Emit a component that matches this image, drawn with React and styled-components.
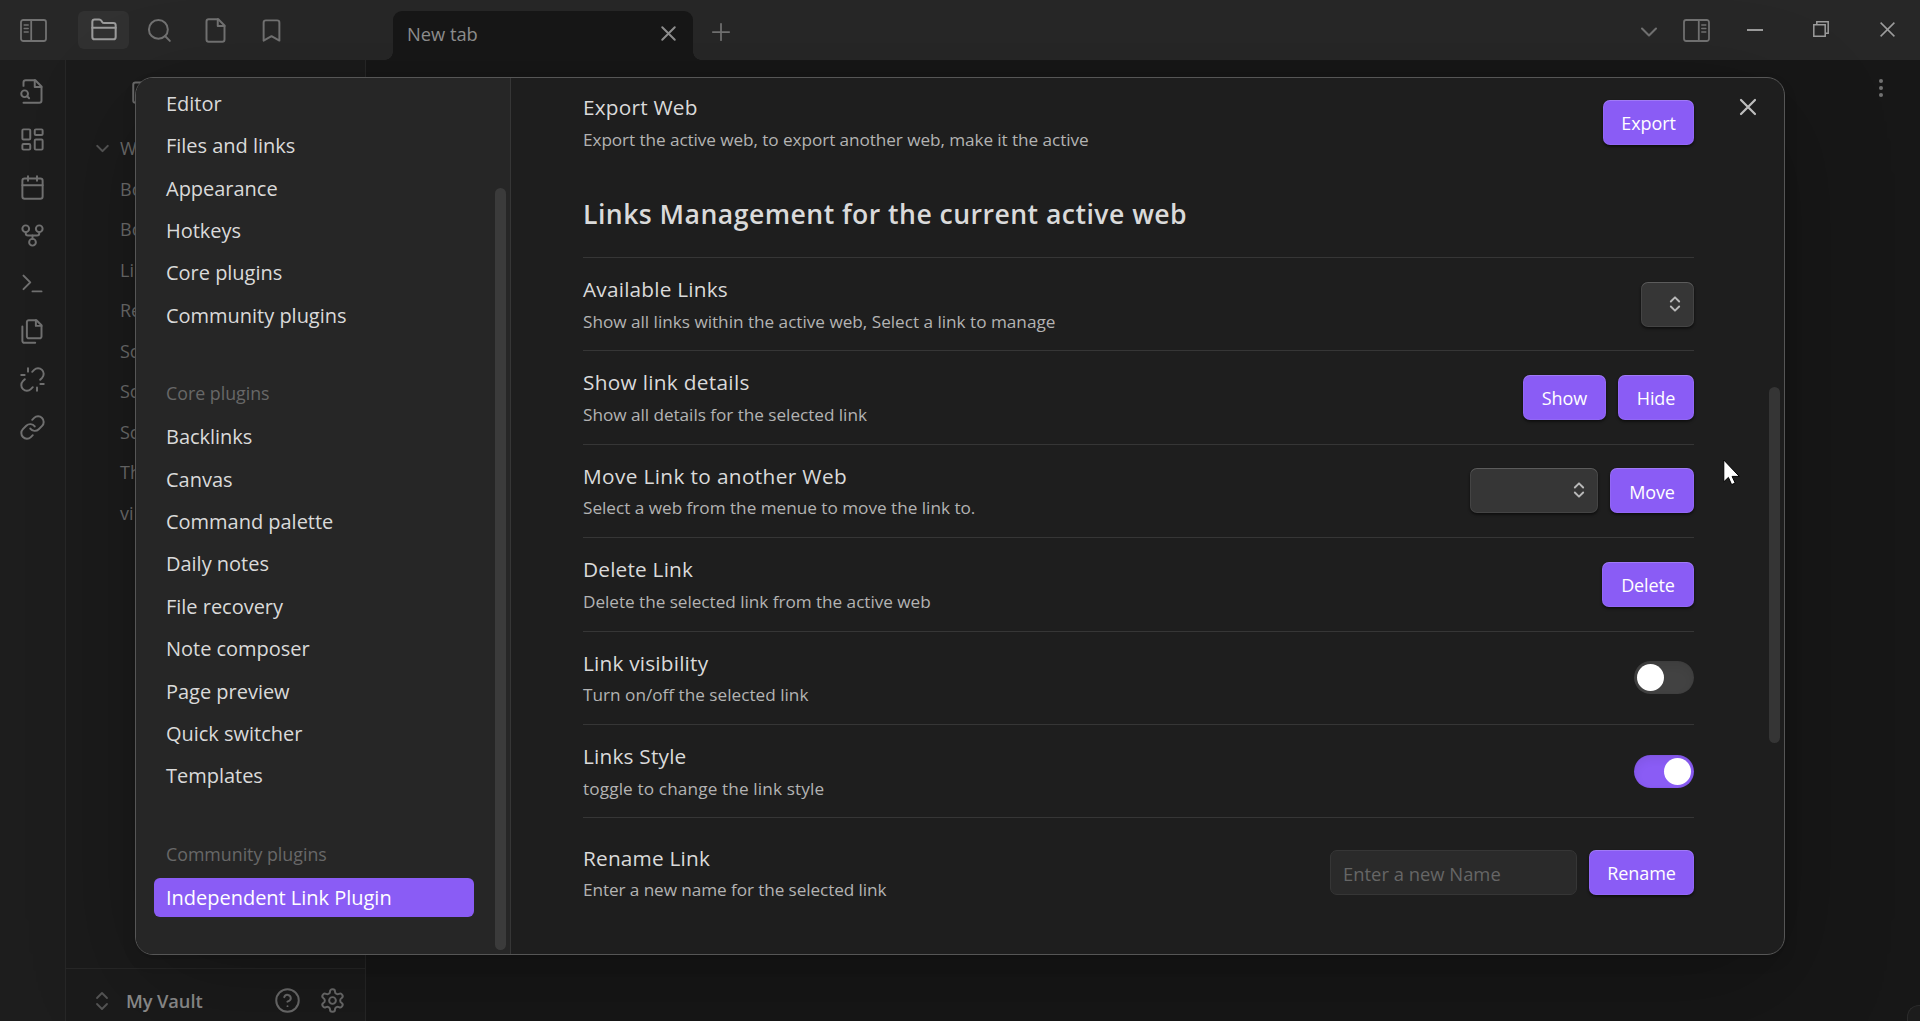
import React from "react";
import styled, { createGlobalStyle, css } from "styled-components";

const GlobalStyle = createGlobalStyle`
  *, *::before, *::after { box-sizing: border-box; }
  body {
    margin: 0;
    background: #171717;
    font-family: "Open Sans", "Noto Sans", sans-serif;
    color: #dadada;
  }
`;

/* ---------- icons ---------- */

const Svg = styled.svg`
  display: block;
  flex: none;
  width: ${(p) => p.$size}px;
  height: ${(p) => p.$size}px;
  fill: none;
  stroke: currentColor;
  stroke-width: ${(p) => p.$stroke};
  stroke-linecap: round;
  stroke-linejoin: round;
`;

const shapes = {
  folder: <><path d="M20 20a2 2 0 0 0 2-2V8a2 2 0 0 0-2-2h-7.9a2 2 0 0 1-1.69-.9L9.6 3.9A2 2 0 0 0 7.93 3H4a2 2 0 0 0-2 2v13a2 2 0 0 0 2 2Z" /><path d="M2 10h20" /></>,
  search: <><circle cx="11" cy="11" r="8.4" /><path d="m21.2 21.2-4.3-4.3" /></>,
  file: <><path d="M14.5 2H6a2 2 0 0 0-2 2v16a2 2 0 0 0 2 2h12a2 2 0 0 0 2-2V7.5L14.5 2z" /><path d="M14 2v6h6" /></>,
  bookmark: <path d="m19 21-7-4-7 4V5a2 2 0 0 1 2-2h10a2 2 0 0 1 2 2v16z" />,
  fileSearch: <><path d="M4 22h14a2 2 0 0 0 2-2V7.5L14.5 2H6a2 2 0 0 0-2 2v3" /><path d="M14 2v6h6" /><circle cx="5" cy="14" r="3" /><path d="m9 18-1.5-1.5" /></>,
  dashboard: <><rect x="3" y="3" width="7" height="9" rx="1" /><rect x="14" y="3" width="7" height="5" rx="1" /><rect x="14" y="12" width="7" height="9" rx="1" /><rect x="3" y="16" width="7" height="5" rx="1" /></>,
  calendar: <><rect x="3" y="4" width="18" height="18" rx="2" /><path d="M16 2v4M8 2v4M3 10h18" /></>,
  fork: <><circle cx="12" cy="18" r="3" /><circle cx="6" cy="6" r="3" /><circle cx="18" cy="6" r="3" /><path d="M18 9v1a2 2 0 0 1-2 2H8a2 2 0 0 1-2-2V9" /><path d="M12 12v3" /></>,
  terminal: <><path d="m4 17 6-6-6-6" /><path d="M12 19h8" /></>,
  files: <><path d="M15.5 2H8.6c-.4 0-.8.2-1.1.5-.3.3-.5.7-.5 1.1v12.8c0 .4.2.8.5 1.1.3.3.7.5 1.1.5h9.8c.4 0 .8-.2 1.1-.5.3-.3.5-.7.5-1.1V6.5L15.5 2z" /><path d="M3 7.6v12.8c0 .4.2.8.5 1.1.3.3.7.5 1.1.5h9.8" /><path d="M15 2v5h5" /></>,
  unlink: <><path d="m18.84 12.25 1.72-1.71h-.02a5.004 5.004 0 0 0-.12-7.07 5.006 5.006 0 0 0-6.95 0l-1.72 1.71" /><path d="m5.17 11.75-1.71 1.71a5.004 5.004 0 0 0 .12 7.07 5.006 5.006 0 0 0 6.95 0l1.71-1.71" /><path d="M8 2v3M2 8h3M16 19v3M19 16h3" /></>,
  link: <><path d="M10 13a5 5 0 0 0 7.54.54l3-3a5 5 0 0 0-7.07-7.07l-1.72 1.71" /><path d="M14 11a5 5 0 0 0-7.54-.54l-3 3a5 5 0 0 0 7.07 7.07l1.71-1.71" /></>,
  x: <path d="M18 6 6 18M6 6l12 12" />,
  plus: <path d="M5 12h14M12 5v14" />,
  chevronDown: <path d="m6 9 6 6 6-6" />,
  chevrons: <path d="m7 15 5 5 5-5M7 9l5-5 5 5" />,
  edit: <><path d="M11 4H4a2 2 0 0 0-2 2v14a2 2 0 0 0 2 2h14a2 2 0 0 0 2-2v-7" /><path d="M18.5 2.5a2.1 2.1 0 0 1 3 3L12 15l-4 1 1-4Z" /></>,
  help: <><circle cx="12" cy="12" r="10" /><path d="M9.09 9a3 3 0 0 1 5.83 1c0 2-3 3-3 3M12 17h.01" /></>,
  settings: <><path d="M12.22 2h-.44a2 2 0 0 0-2 2v.18a2 2 0 0 1-1 1.73l-.43.25a2 2 0 0 1-2 0l-.15-.08a2 2 0 0 0-2.73.73l-.22.38a2 2 0 0 0 .73 2.73l.15.1a2 2 0 0 1 1 1.72v.51a2 2 0 0 1-1 1.74l-.15.09a2 2 0 0 0-.73 2.73l.22.38a2 2 0 0 0 2.73.73l.15-.08a2 2 0 0 1 2 0l.43.25a2 2 0 0 1 1 1.73V20a2 2 0 0 0 2 2h.44a2 2 0 0 0 2-2v-.18a2 2 0 0 1 1-1.73l.43-.25a2 2 0 0 1 2 0l.15.08a2 2 0 0 0 2.73-.73l.22-.39a2 2 0 0 0-.73-2.73l-.15-.08a2 2 0 0 1-1-1.74v-.5a2 2 0 0 1 1-1.74l.15-.09a2 2 0 0 0 .73-2.73l-.22-.38a2 2 0 0 0-2.73-.73l-.15.08a2 2 0 0 1-2 0l-.43-.25a2 2 0 0 1-1-1.73V4a2 2 0 0 0-2-2z" /><circle cx="12" cy="12" r="3" /></>,
  dots: <g fill="currentColor" stroke="none"><circle cx="12" cy="6" r="1.75" /><circle cx="12" cy="12" r="1.75" /><circle cx="12" cy="18" r="1.75" /></g>,
};

function Icon({ name, size = 27, stroke = 1.75 }) {
  return (
    <Svg viewBox="0 0 24 24" $size={size} $stroke={stroke} aria-hidden="true">
      {shapes[name]}
    </Svg>
  );
}

const PanelSvg = styled.svg`
  display: block;
  width: 27px;
  height: 23px;
  fill: none;
  stroke: currentColor;
  stroke-width: 1.8;
  stroke-linecap: round;
  transform: ${(p) => (p.$flip ? "scaleX(-1)" : "none")};
`;

function PanelIcon({ flip }) {
  return (
    <PanelSvg viewBox="0 0 27 23" $flip={flip} aria-hidden="true">
      <rect x="1" y="1" width="25" height="21" rx="2.2" />
      <path d="M11.2 1v21" />
      <path d="M4.2 6h4M4.2 9.5h4M4.2 13h4" strokeWidth="1.5" />
    </PanelSvg>
  );
}

/* ---------- window ---------- */

const Window = styled.div`
  display: grid;
  grid-template-rows: 60px 1fr;
  height: 1021px;
  overflow: hidden;
  position: relative;
  background: #171717;
`;

const TitleBar = styled.header`
  display: flex;
  align-items: stretch;
  background: #272727;
  color: #727272;
`;

const SidebarTop = styled.div`
  width: 393px;
  display: flex;
  align-items: center;
  padding: 0 0 0 20px;
`;

const TabIcons = styled.div`
  display: flex;
  align-items: center;
  margin-left: 31px;
  gap: 5px;
`;

const TabIcon = styled.div`
  width: 51px;
  height: 38px;
  border-radius: 6px;
  display: flex;
  align-items: center;
  justify-content: center;
  background: ${(p) => (p.$active ? "#313131" : "transparent")};
  color: ${(p) => (p.$active ? "#9b9b9b" : "inherit")};
`;

const Tab = styled.div`
  position: relative;
  width: 300px;
  margin-top: 11px;
  padding: 0 12px 4px 14px;
  border-radius: 9px 9px 0 0;
  background: #171717;
  color: #8f8f8f;
  font-size: 18.3px;
  display: flex;
  align-items: center;
  justify-content: space-between;
  &::before,
  &::after {
    content: "";
    position: absolute;
    bottom: 0;
    width: 8px;
    height: 8px;
  }
  &::before {
    left: -8px;
    background: radial-gradient(circle at 0 0, #272727 7.5px, #171717 8px);
  }
  &::after {
    right: -8px;
    background: radial-gradient(circle at 100% 0, #272727 7.5px, #171717 8px);
  }
`;

const NewTab = styled.div`
  display: flex;
  align-items: center;
  padding: 3px 0 0 14px;
`;

const WindowButtons = styled.div`
  display: flex;
  align-items: center;
  margin-left: auto;
  color: #9c9c9c;
`;

const Slot = styled.div`
  display: flex;
  justify-content: center;
  align-items: center;
  width: ${(p) => p.$w}px;
  margin-top: ${(p) => p.$mt || 0}px;
  color: ${(p) => (p.$dim ? "#727272" : "inherit")};
`;

const Body = styled.div`
  display: flex;
  min-height: 0;
`;

const Ribbon = styled.nav`
  width: 66px;
  border-right: 1px solid #272727;
  background: #1d1d1d;
  color: #707070;
  display: flex;
  flex-direction: column;
  align-items: center;
  gap: 21px;
  padding: 18px 0 0 0;
`;

const Explorer = styled.aside`
  width: 300px;
  border-right: 1px solid #272727;
  background: #1b1b1b;
  color: #6c6c6c;
  display: flex;
  flex-direction: column;
`;

const ExplorerTools = styled.div`
  height: 68px;
  padding: 18px 0 0 65px;
`;

const Tree = styled.div`
  flex: 1;
  font-size: 18px;
`;

const TreeRow = styled.div`
  display: flex;
  align-items: center;
  height: 40.5px;
  padding-left: ${(p) => (p.$folder ? 26 : 54)}px;
  gap: 7px;
  svg { color: #555; }
`;

const VaultBar = styled.footer`
  height: 53px;
  border-top: 1px solid #272727;
  display: flex;
  align-items: center;
  padding: 11px 19px 0 24px;
  color: #6c6c6c;
  > svg { color: #565656; }
`;

const VaultName = styled.span`
  flex: 1;
  margin-left: 12px;
  font-size: 18.3px;
  font-weight: 600;
  letter-spacing: -0.1px;
  color: #8d8d8d;
  line-height: 24px;
`;

const VaultActions = styled.div`
  display: flex;
  gap: 18px;
`;

const Workspace = styled.main`
  flex: 1;
  display: flex;
  flex-direction: column;
  justify-content: space-between;
  align-items: flex-end;
  padding: 14px 0 0;
  color: #727272;
  background: #171717;
`;

const MoreSlot = styled.div`
  margin-right: 25px;
`;

const StatusBar = styled.div`
  width: 13px;
  height: 16px;
  border: 1px solid #2b2b2b;
  border-width: 1px 0 0 1px;
  border-radius: 12px 0 0 0;
  background: #1c1c1c;
`;

/* ---------- settings modal ---------- */

const Overlay = styled.div`
  position: absolute;
  inset: 0;
  display: flex;
  justify-content: center;
  align-items: flex-start;
  padding-top: 77px;
`;

const Modal = styled.section`
  position: relative;
  display: flex;
  width: 1650px;
  height: 878px;
  border: 1px solid #565656;
  border-radius: 18px;
  overflow: hidden;
  background: #1e1e1e;
  box-shadow: 0 2px 3px rgba(0, 0, 0, 0.04), 0 7px 16px rgba(0, 0, 0, 0.07),
    0 30px 110px rgba(0, 0, 0, 0.24);
`;

const Nav = styled.nav`
  width: 375px;
  flex: none;
  border-right: 1px solid #363636;
  background: #262626;
  display: flex;
  justify-content: space-between;
`;

const NavList = styled.div`
  width: 338px;
  padding: 5.8px 0 0 18px;
  display: flex;
  flex-direction: column;
  gap: 2.8px;
`;

const NavItem = styled.div`
  flex: none;
  height: 39.6px;
  line-height: 39.6px;
  padding-left: 12px;
  border-radius: 6px;
  font-size: 20px;
  letter-spacing: -0.02px;
  white-space: nowrap;
  ${(p) =>
    p.$active &&
    css`
      background: #8a5cf5;
      color: #fff;
    `}
`;

const NavHeader = styled.div`
  flex: none;
  height: 29px;
  margin-top: 41.2px;
  margin-bottom: 6.1px;
  padding-left: 12px;
  line-height: 29px;
  font-size: 17.8px;
  font-weight: 500;
  color: #686868;
`;

const Scrollbar = styled.div`
  flex: none;
  width: 11px;
  height: ${(p) => p.$h}px;
  margin-top: ${(p) => p.$top}px;
  margin-right: 4px;
  border-radius: 6px;
  background: ${(p) => p.$color};
`;

const Content = styled.div`
  flex: 1;
  display: flex;
  padding-left: 72px;
`;

const Settings = styled.div`
  width: 1111px;
  flex: none;
  margin-top: -3px;
`;

const CloseColumn = styled.div`
  flex: 1;
  padding: 15px 0 0 40px;
  color: #bdbdbd;
`;

const SettingRow = styled.div`
  display: flex;
  align-items: center;
  justify-content: space-between;
  height: ${(p) => (p.$tall ? 110 : 93.4)}px;
  border-top: 1px solid ${(p) => (p.$plain ? "transparent" : "#363636")};
`;

const Info = styled.div`
  padding-top: 1.4px;
`;

const Title = styled.div`
  font-size: 20.8px;
  line-height: 28px;
  letter-spacing: ${(p) => p.$track ?? 0.2}px;
`;

const Desc = styled.div`
  margin-top: 5.6px;
  font-size: 17.2px;
  line-height: 26px;
  letter-spacing: ${(p) => p.$track ?? -0.04}px;
  color: #b3b3b3;
`;

const Heading = styled.h3`
  margin: 0;
  height: 88.6px;
  padding-top: 26.2px;
  font-size: 26.6px;
  line-height: 38px;
  font-weight: 600;
  letter-spacing: 0.46px;
`;

const Controls = styled.div`
  display: flex;
  align-items: center;
  gap: 12px;
`;

const raised = css`
  box-shadow: inset 0 1px 0 rgba(255, 255, 255, 0.13),
    inset 0 0 0 1px rgba(255, 255, 255, 0.07), 0 2px 3px rgba(0, 0, 0, 0.35),
    0 1px 2px rgba(0, 0, 0, 0.3);
`;

const Button = styled.button`
  width: ${(p) => p.$w}px;
  height: 45px;
  padding: 1.2px 0 0;
  border: 0;
  border-radius: 7px;
  background: #8a5cf5;
  color: #fff;
  font: 400 18px/24px "Open Sans", "Noto Sans", sans-serif;
  letter-spacing: -0.1px;
  ${raised}
`;

const Select = styled.div`
  width: ${(p) => p.$w}px;
  height: 45px;
  padding: 0 9px 1px 0;
  border-radius: 7px;
  background: #363636;
  color: #b9b9b9;
  display: flex;
  justify-content: flex-end;
  align-items: center;
  ${raised}
`;

const Field = styled.input`
  width: 247px;
  height: 45px;
  padding: 1px 12px 0;
  border: 1px solid #363636;
  border-radius: 7px;
  background: #2a2a2a;
  font: 400 18.4px/24px "Open Sans", "Noto Sans", sans-serif;
  outline: none;
  &::placeholder {
    color: #666;
    opacity: 1;
  }
`;

const Toggle = styled.div`
  width: 60px;
  height: 33px;
  padding: 3px;
  border-radius: 17px;
  display: flex;
  justify-content: ${(p) => (p.$on ? "flex-end" : "flex-start")};
  background: ${(p) => (p.$on ? "#8a5cf5" : "#424242")};
  box-shadow: inset 0 4px 10px rgba(0, 0, 0, 0.07), inset 0 0 1px rgba(0, 0, 0, 0.21);
  &::after {
    content: "";
    width: 27px;
    height: 27px;
    border-radius: 50%;
    background: #fff;
  }
`;

const Cursor = styled.svg`
  position: absolute;
  left: 1723px;
  top: 459px;
  width: 18px;
  height: 27px;
`;

const optionItems = ["Editor", "Files and links", "Appearance", "Hotkeys", "Core plugins", "Community plugins"];
const coreItems = ["Backlinks", "Canvas", "Command palette", "Daily notes", "File recovery", "Note composer", "Page preview", "Quick switcher", "Templates"];
const ribbonIcons = ["fileSearch", "dashboard", "calendar", "fork", "terminal", "files", "unlink", "link"];
const treeItems = ["Bo", "Bo", "Li", "Re", "Sc", "Sc", "Sc", "Th", "vi"];

function Dropdown({ width }) {
  return (
    <Select $w={width}>
      <Icon name="chevrons" size={20} stroke={2.3} />
    </Select>
  );
}

function Setting({ title, desc, titleTrack, descTrack, plain, tall, children }) {
  return (
    <SettingRow $plain={plain} $tall={tall}>
      <Info>
        <Title $track={titleTrack}>{title}</Title>
        <Desc $track={descTrack}>{desc}</Desc>
      </Info>
      <Controls>{children}</Controls>
    </SettingRow>
  );
}

export default function App() {
  return (
    <Window>
      <GlobalStyle />
      <TitleBar>
        <SidebarTop>
          <PanelIcon />
          <TabIcons>
            <TabIcon $active><Icon name="folder" size={28} /></TabIcon>
            <TabIcon><Icon name="search" size={27} /></TabIcon>
            <TabIcon><Icon name="file" size={27} /></TabIcon>
            <TabIcon><Icon name="bookmark" size={27} /></TabIcon>
          </TabIcons>
        </SidebarTop>
        <Tab>
          <span>New tab</span>
          <Icon name="x" size={25} stroke={1.9} />
        </Tab>
        <NewTab><Icon name="plus" size={28} stroke={1.5} /></NewTab>
        <WindowButtons>
          <Slot $w={45} $mt={3} $dim><Icon name="chevronDown" size={28} stroke={1.8} /></Slot>
          <Slot $w={51} $dim><PanelIcon flip /></Slot>
          <Slot $w={66}>
            <svg width="16" height="2" aria-hidden="true"><rect width="16" height="2" fill="currentColor" /></svg>
          </Slot>
          <Slot $w={66} $mt={-2}>
            <svg width="16" height="16" fill="none" stroke="currentColor" strokeWidth="1.5" aria-hidden="true">
              <path d="M.8 3.8h11.4v11.4H.8z" />
              <path d="M3.8 3.8V.8h11.4v11.4h-3" />
            </svg>
          </Slot>
          <Slot $w={66} $mt={-2}>
            <svg width="15" height="15" fill="none" stroke="currentColor" strokeWidth="1.5" aria-hidden="true">
              <path d="m.6.6 13.8 13.8M14.4.6.6 14.4" />
            </svg>
          </Slot>
        </WindowButtons>
      </TitleBar>
      <Body>
        <Ribbon>
          {ribbonIcons.map((name) => <Icon key={name} name={name} />)}
        </Ribbon>
        <Explorer>
          <ExplorerTools><Icon name="edit" /></ExplorerTools>
          <Tree>
            <TreeRow $folder>
              <Icon name="chevronDown" size={21} stroke={2.4} />
              <span>W</span>
            </TreeRow>
            {treeItems.map((label, i) => <TreeRow key={i}>{label}</TreeRow>)}
          </Tree>
          <VaultBar>
            <Icon name="chevrons" size={24} stroke={1.8} />
            <VaultName>My Vault</VaultName>
            <VaultActions>
              <Icon name="help" size={27} />
              <Icon name="settings" size={27} />
            </VaultActions>
          </VaultBar>
        </Explorer>
        <Workspace>
          <MoreSlot><Icon name="dots" size={28} /></MoreSlot>
          <StatusBar />
        </Workspace>
      </Body>
      <Overlay>
        <Modal>
          <Nav>
            <NavList>
              {optionItems.map((label) => <NavItem key={label}>{label}</NavItem>)}
              <NavHeader>Core plugins</NavHeader>
              {coreItems.map((label) => <NavItem key={label}>{label}</NavItem>)}
              <NavHeader>Community plugins</NavHeader>
              <NavItem $active>Independent Link Plugin</NavItem>
            </NavList>
            <Scrollbar $h={762} $top={110} $color="#3b3b3b" />
          </Nav>
          <Content>
            <Settings>
              <Setting plain title="Export Web" desc="Export the active web, to export another web, make it the active" descTrack={-0.08}>
                <Button $w={91}>Export</Button>
              </Setting>
              <Heading>Links Management for the current active web</Heading>
              <Setting title="Available Links" desc="Show all links within the active web, Select a link to manage" descTrack={-0.02}>
                <Dropdown width={53} />
              </Setting>
              <Setting title="Show link details" desc="Show all details for the selected link" titleTrack={0.3}>
                <Button $w={83}>Show</Button>
                <Button $w={76}>Hide</Button>
              </Setting>
              <Setting title="Move Link to another Web" desc="Select a web from the menue to move the link to." titleTrack={0.36} descTrack={-0.02}>
                <Dropdown width={128} />
                <Button $w={84}>Move</Button>
              </Setting>
              <Setting title="Delete Link" desc="Delete the selected link from the active web">
                <Button $w={92}>Delete</Button>
              </Setting>
              <Setting title="Link visibility" desc="Turn on/off the selected link" descTrack={0}>
                <Toggle />
              </Setting>
              <Setting title="Links Style" desc="toggle to change the link style" descTrack={0.13}>
                <Toggle $on />
              </Setting>
              <Setting tall title="Rename Link" desc="Enter a new name for the selected link" descTrack={-0.09}>
                <Field placeholder="Enter a new Name" />
                <Button $w={105}>Rename</Button>
              </Setting>
            </Settings>
            <CloseColumn><Icon name="x" size={28} stroke={1.9} /></CloseColumn>
            <Scrollbar $h={356} $top={309} $color="#353535" />
          </Content>
        </Modal>
      </Overlay>
      <Cursor viewBox="0 0 18 27" aria-hidden="true">
        <path d="M.8 1v21.8l4.6-4.4 3.2 7.2 3.6-1.6-3.1-6.6h7.2Z" fill="#fff" stroke="#000" strokeWidth="1" />
      </Cursor>
    </Window>
  );
}
